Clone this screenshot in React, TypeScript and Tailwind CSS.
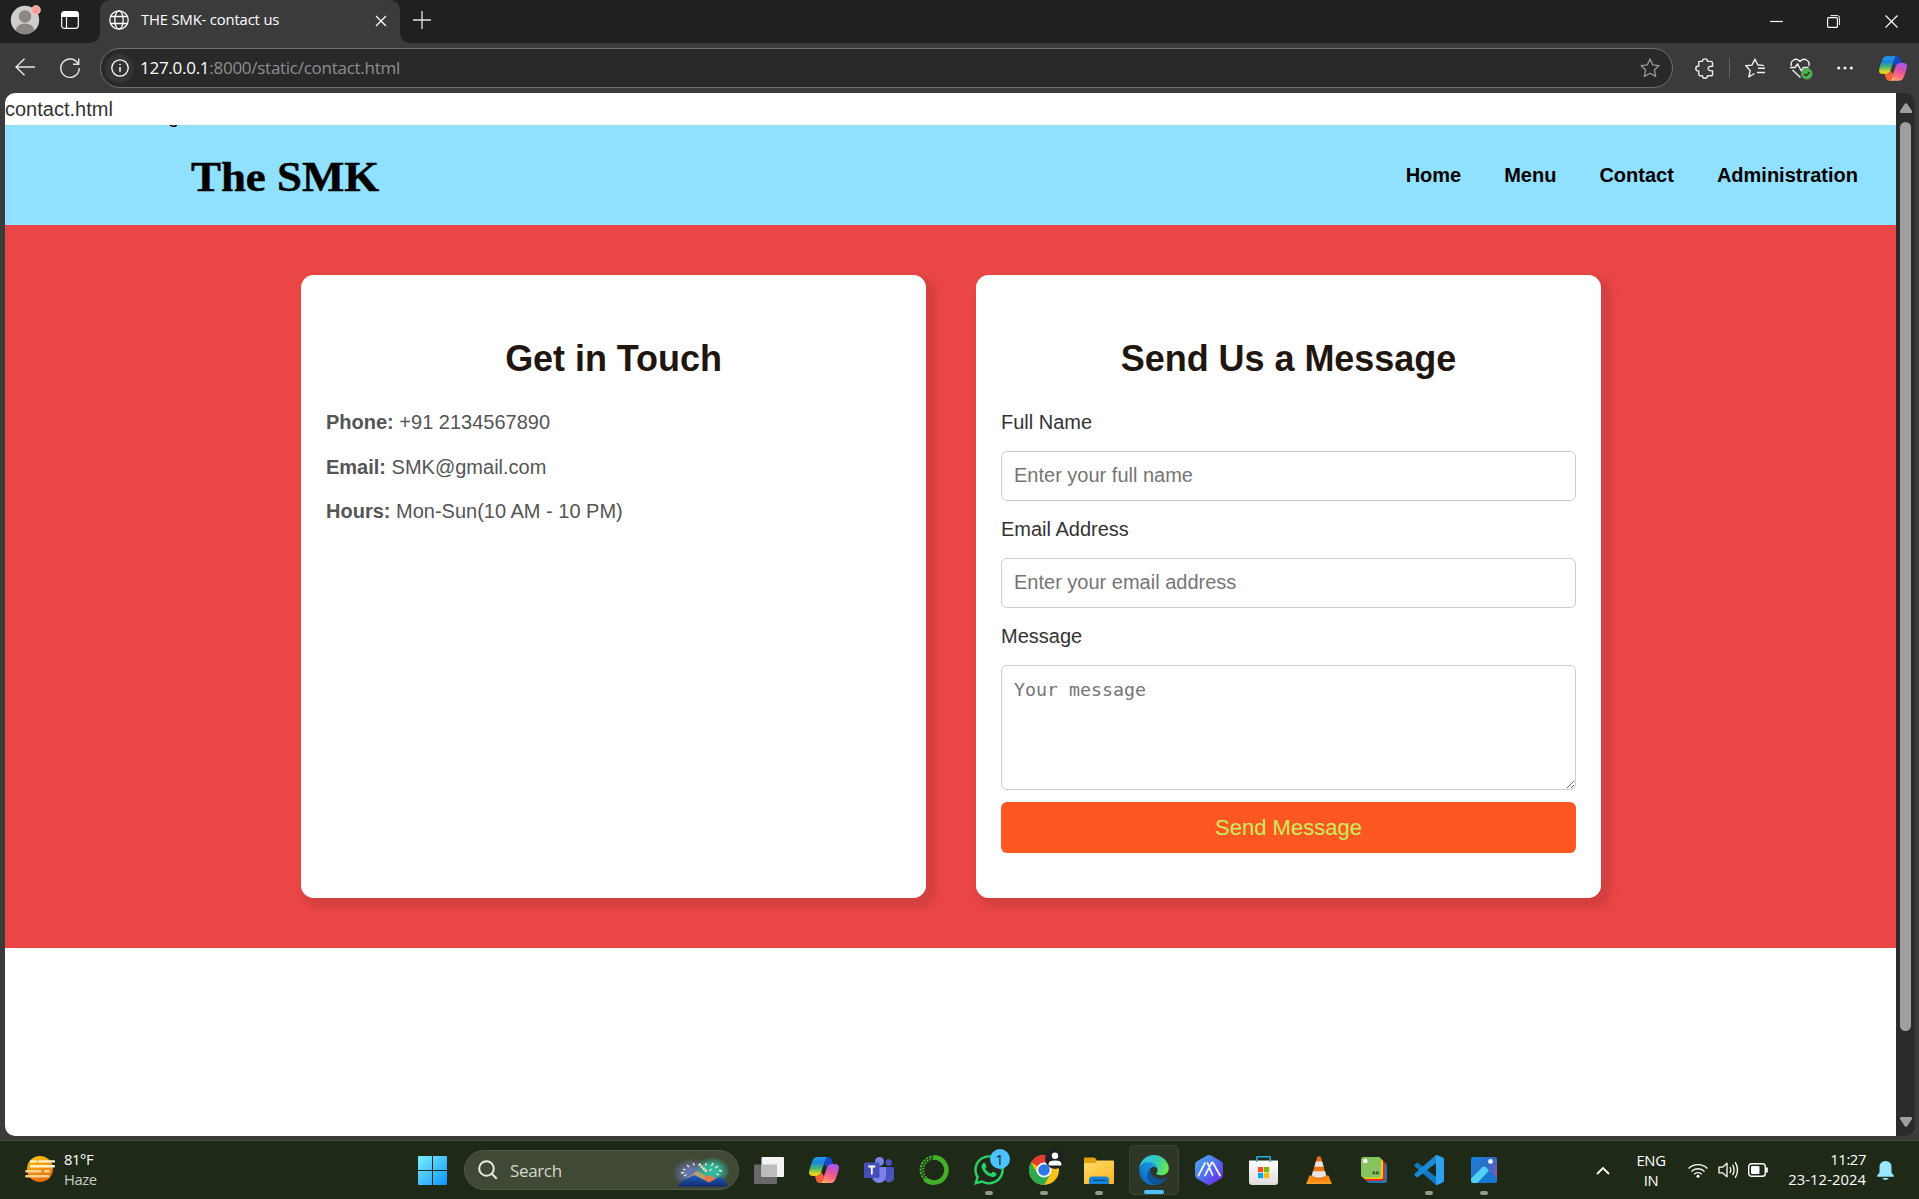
import React from "react";
import { FaWhatsapp } from "react-icons/fa";

const ui = "font-['Open_Sans',sans-serif]";

function CopilotIcon({ id, className }: { id: string; className: string }) {
  return (
    <svg viewBox="0 0 30 27" className={className}>
      <defs>
        <linearGradient id={id + "a"} x1="0" y1="0" x2="0" y2="1">
          <stop offset="0" stopColor="#1f9cf0" />
          <stop offset="0.3" stopColor="#1b84dd" />
          <stop offset="0.6" stopColor="#4bb573" />
          <stop offset="0.85" stopColor="#d3d62b" />
          <stop offset="1" stopColor="#f5c518" />
        </linearGradient>
        <linearGradient id={id + "b"} x1="0.6" y1="0" x2="0.3" y2="1">
          <stop offset="0" stopColor="#a855f0" />
          <stop offset="0.4" stopColor="#e0539c" />
          <stop offset="0.75" stopColor="#ff6f7d" />
          <stop offset="1" stopColor="#ffb168" />
        </linearGradient>
      </defs>
      <path d="M8.500.5h11.500c-2 0-3 1.200-3.800 3.500l-4.200 12c-.9 2.500-2 3.500-4.500 3.500h-3.500c-3 0-4.500-1.700-3.800-5 .8-3.800 2-7.500 3.600-11 .9-2 2.200-3 4.700-3z" fill={`url(#${id}a)`} />
      <path d="M21.500 26.500h-11.500c2 0 3-1.200 3.800-3.500l4.200-12c.9-2.500 2-3.500 4.500-3.500h3.500c3 0 4.500 1.700 3.800 5-.8 3.800-2 7.500-3.600 11-.9 2-2.200 3-4.700 3z" fill={`url(#${id}b)`} />
      <path d="M19 .5c2.400 0 3.200 1 3.800 3l1.200 4h-2c-2 0-3.200.8-4 3l-.4 1-2.600-4.500L16.200 4c.7-2.300 1.500-3.500 2.800-3.500z" fill="#1547c8" />
      <path d="M11 26.500c-2.400 0-3.200-1-3.800-3l-1.200-4h2c2 0 3.200-.8 4-3l.4-1 2.600 4.500-1.200 3c-.7 2.300-1.500 3.500-2.800 3.500z" fill="#f8603a" />
    </svg>
  );
}

function TitleBar() {
  return (
    <div className={`flex h-[43px] shrink-0 bg-[#3b3b3b] text-white ${ui}`}>
      <div className="flex w-[100px] shrink-0 items-start rounded-br-[10px] bg-[#202020] pt-[5px] pl-[10px]">
        <svg viewBox="0 0 32 30" className="h-[30px] w-8">
          <circle cx="15" cy="15" r="14.200" fill="#d0cecb" />
          <circle cx="15" cy="11.500" r="6.200" fill="#8b8784" />
          <path d="M5.500 25.500c1-4 4-7 9.500-7s8.500 3 9.500 7q-4 3.700-9.500 3.700t-9.500-3.700z" fill="#8b8784" />
          <circle cx="26" cy="5" r="4.400" fill="#ff9d96" stroke="#e6d3d0" strokeWidth="0.800" />
        </svg>
        <svg viewBox="0 0 18 18" className="mt-[6px] ml-[19px] h-[18px] w-[18px]" fill="none" stroke="#fff" strokeWidth="1.200">
          <rect x="0.700" y="0.700" width="16.600" height="16.600" rx="2.500" />
          <path d="M1 2.500q.5-1.500 2-1.500h12q1.500 0 2 1.500v3h-16z" fill="#fff" />
          <path d="M5.500 5v12" />
        </svg>
      </div>
      <div className="bg-[#202020]">
        <div className="flex h-[43px] w-[300px] items-start rounded-t-[10px] bg-[#3b3b3b] pt-[10px] pl-[9px]">
          <svg viewBox="0 0 20 20" className="h-5 w-5" fill="none" stroke="#fff" strokeWidth="1.300">
            <circle cx="10" cy="10" r="9.200" />
            <ellipse cx="10" cy="10" rx="4.200" ry="9.200" />
            <path d="M1.800 6.500h16.400M1.800 13.500h16.400" />
          </svg>
          <span className="-mt-px ml-[12px] w-[140px] text-[14.800px] leading-5 tracking-[-0.150px] whitespace-nowrap">THE SMK- contact us</span>
          <svg viewBox="0 0 12 12" className="mt-[5px] ml-[94px] h-3 w-3" stroke="#fff" strokeWidth="1.300">
            <path d="M1 1l10 10M11 1L1 11" />
          </svg>
        </div>
      </div>
      <div className="flex flex-1 items-start rounded-bl-[10px] bg-[#202020]">
        <svg viewBox="0 0 18 18" className="mt-[11px] ml-[13px] h-[18px] w-[18px]" stroke="#e4e4e4" strokeWidth="1.300">
          <path d="M9 0v18M0 9h18" />
        </svg>
        <div className="flex-1" />
        <svg viewBox="0 0 13 13" className="mt-[15px] h-[13px] w-[13px]" stroke="#fff" strokeWidth="1.200">
          <path d="M0 6.500h13" />
        </svg>
        <svg viewBox="0 0 13 13" className="mt-[15px] ml-[44px] h-[13px] w-[13px]" stroke="#fff" fill="none">
          <rect x="0.600" y="2.600" width="9.800" height="9.800" rx="1" strokeWidth="1.200" />
          <path d="M3.500.6h7q1.900 0 1.900 1.900v7.500" />
        </svg>
        <svg viewBox="0 0 13 13" className="mt-[15px] mr-[21px] ml-[45px] h-[13px] w-[13px]" stroke="#fff" strokeWidth="1.200">
          <path d="M.5.5l12 12M12.500.5l-12 12" />
        </svg>
      </div>
    </div>
  );
}

function Toolbar() {
  return (
    <div className={`flex h-[50px] shrink-0 items-center bg-[#3b3b3b] ${ui}`}>
      <svg viewBox="0 0 20 18" className="-mt-[2px] ml-[15px] h-[18px] w-5" fill="none" stroke="#e6e6e6" strokeWidth="1.500">
        <path d="M9.500.8L1 9l8.500 8.200M1 9h19" />
      </svg>
      <svg viewBox="0 0 20 20" className="ml-[25px] h-5 w-5" fill="none" stroke="#e6e6e6" strokeWidth="1.400">
        <path d="M18.200 6A9.200 9.200 0 1 0 19.200 10" />
        <path d="M18.700.5v5.700h-5.700" />
      </svg>
      <div className="ml-5 flex h-10 w-[1573px] items-center rounded-full border border-[#707070] bg-[#292929] pl-[4px]">
        <div className="flex h-[29px] w-[29px] items-center justify-center rounded-full bg-[#343434]">
          <svg viewBox="0 0 18 18" className="h-[18px] w-[18px]" fill="none" stroke="#fff" strokeWidth="1.300">
            <circle cx="9" cy="9" r="8.200" />
            <path d="M9 8v4.800" strokeWidth="1.500" />
            <circle cx="9" cy="5.600" r="0.500" fill="#fff" strokeWidth="0.800" />
          </svg>
        </div>
        <span className="ml-[6px] text-[17px] tracking-[-0.270px] whitespace-nowrap text-[#8f8f8f]">
          <span className="text-white">127.0.0.1</span>:8000/static/contact.html
        </span>
        <svg viewBox="0 0 20 20" className="mr-[12px] ml-auto h-5 w-5" fill="none" stroke="#9a9a9a" strokeWidth="1.300" strokeLinejoin="round">
          <path d="M10 1l2.700 5.900 6.300.7-4.700 4.300 1.400 6.500L10 15.200l-5.700 3.200 1.400-6.500L1 7.600l6.300-.7z" />
        </svg>
      </div>
      <svg viewBox="0 0 20 22" className="ml-[22px] h-[21px] w-[19px]" fill="none" stroke="#e8e8e8" strokeWidth="1.500" strokeLinejoin="round">
        <path d="M4 3.500h3.800c0-3.500 5.400-3.500 5.400 0h3.300q2 0 2 2v3.300c-3.600-.5-4.700 1.200-4.700 2.300s1.100 2.800 4.700 2.300v3.300q0 2-2 2h-3.300c0 3.500-5.400 3.500-5.400 0H5.500q-1.500 0-1.500-1.500v-3.500c-4.200 0-4.200-5.400 0-5.400z" />
      </svg>
      <div className="ml-[15px] h-5 w-px bg-[#636363]" />
      <svg viewBox="0 0 20 20" className="ml-[15px] h-5 w-5" fill="none" stroke="#f0f0f0" strokeWidth="1.400" strokeLinejoin="round">
        <path d="M9.500 15.500L3.800 18.800l1.400-6.400L.8 7.800l6.100-.7L10 1.200l2.700 5.500 6.300.9" />
        <path d="M13 10.300h7M12 14.500h8" />
      </svg>
      <svg viewBox="0 0 23 22" className="mt-[2px] ml-[25px] h-[22px] w-[23px]" fill="none" stroke="#f0f0f0" strokeWidth="1.400" strokeLinejoin="round">
        <path d="M1.500 8C-.5 3 6-1.500 10 3.500 14-1.500 20.500 3 18.800 8" />
        <path d="M0 9.500h5l2.500-3.700 3.800 7.200 2.300-3.500h5" />
        <path d="M2.500 12l8 7.500" />
        <circle cx="16.800" cy="15.800" r="5.700" fill="#4fae4f" stroke="none" />
        <path d="M14.200 16l1.900 1.800 3.500-3.600" stroke="#1e3a1e" strokeWidth="1.500" />
      </svg>
      <svg viewBox="0 0 16 4" className="-mt-[1px] ml-[24px] h-1 w-4" fill="#f0f0f0">
        <circle cx="1.700" cy="2" r="1.600" />
        <circle cx="8" cy="2" r="1.600" />
        <circle cx="14.300" cy="2" r="1.600" />
      </svg>
      <CopilotIcon id="tb" className="ml-[26px] h-[27px] w-7" />
    </div>
  );
}

function Field({ label, placeholder }: { label: string; placeholder: string }) {
  return (
    <>
      <label className="text-[#333]">{label}</label>
      <input
        placeholder={placeholder}
        className="h-[50px] rounded-[6px] border border-[#ccc] px-[12px] pb-[1px] text-[20px] placeholder:text-[#757575]"
      />
    </>
  );
}

const cardClass =
  "w-[625px] rounded-[12.500px] bg-white px-[25px] pt-[54.900px] text-[20px] leading-8 shadow-[6px_6px_8px_4px_rgba(0,0,0,0.1)]";
const headingClass = "mb-[18.750px] text-center text-[36px] leading-[57.600px] font-bold tracking-[-0.050px] text-[#1f1610]";

function WebPage() {
  return (
    <div className="flex-1 overflow-hidden rounded-l-[10px] bg-white font-['Liberation_Sans',Arial,sans-serif] text-[20px] leading-8 text-[#333]">
      <div className="h-8">contact.html</div>
      <header className="relative flex h-[100px] items-center justify-between overflow-hidden bg-[#90e0ff] pr-[38px] pl-[186px] text-black">
        <span className="absolute -top-[25px] left-[163px]" aria-hidden="true">g</span>
        <div className="mt-[4px] origin-left scale-x-[1.055] font-['Liberation_Serif',serif] text-[42.500px] leading-[50px] font-bold whitespace-nowrap [-webkit-text-stroke:0.500px_black]">The SMK</div>
        <nav className="flex gap-[43px] font-bold">
          <a>Home</a>
          <a>Menu</a>
          <a>Contact</a>
          <a>Administration</a>
        </nav>
      </header>
      <main className="flex h-[723px] justify-center gap-[50px] bg-[#eb4646] py-[50px] pl-px">
        <section className={cardClass}>
          <h2 className={headingClass}>Get in Touch</h2>
          <div className="flex flex-col gap-[12.500px] text-[#555]">
            <p><strong>Phone:</strong> +91 2134567890</p>
            <p><strong>Email:</strong> SMK@gmail.com</p>
            <p><strong>Hours:</strong> Mon-Sun(10 AM - 10 PM)</p>
          </div>
        </section>
        <section className={cardClass}>
          <h2 className={headingClass}>Send Us a Message</h2>
          <form className="flex flex-col gap-[12.500px]">
            <Field label="Full Name" placeholder="Enter your full name" />
            <Field label="Email Address" placeholder="Enter your email address" />
            <label className="text-[#333]">Message</label>
            <textarea
              placeholder="Your message"
              className="h-[125px] resize rounded-[6px] border border-[#ccc] px-[12px] pt-[12px] font-['DejaVu_Sans_Mono',monospace] text-[18.270px] leading-[24px] placeholder:text-[#757575]"
            />
            <button type="button" className="h-[51px] rounded-[6px] bg-[#ff5722] text-[22px] text-[#c6ee5e]">Send Message</button>
          </form>
        </section>
      </main>
    </div>
  );
}

function Scrollbar() {
  return (
    <div className="flex w-[19px] shrink-0 flex-col items-center rounded-r-[10px] bg-[#2b2b2b] pt-[10px] pb-[9px]">
      <svg viewBox="0 0 12 10" className="h-[10px] w-3" fill="#9f9f9f">
        <path d="M4.800.8q1.200-1.200 2.400 0L12 8q.3 2-1 2H1Q-.3 10 0 8z" />
      </svg>
      <div className="mt-[9px] h-[909px] w-[11px] rounded-full bg-[#9f9f9f]" />
      <svg viewBox="0 0 12 10" className="mt-auto h-[10px] w-3" fill="#9f9f9f">
        <path d="M4.800 9.200q1.200 1.200 2.400 0L12 2q.3-2-1-2H1Q-.3 0 0 2z" />
      </svg>
    </div>
  );
}

function AppCell({ children, running, active }: { children: React.ReactNode; running?: boolean; active?: boolean }) {
  return (
    <div className="flex w-[55px] justify-center">
      <div
        className={
          active
            ? "relative flex h-[50px] w-[50px] items-center justify-center rounded-[5px] border border-[#3a4433] bg-[#2d3627]"
            : "relative flex h-[50px] w-[50px] items-center justify-center"
        }
      >
        {children}
        {running && <div className="absolute bottom-0 left-[21px] h-1 w-2 rounded-full bg-[#929b8c]" />}
        {active && <div className="absolute bottom-0 left-[14px] h-1 w-5 rounded-full bg-[#4cc2ff]" />}
      </div>
    </div>
  );
}

function TeamsIcon() {
  return (
    <svg viewBox="0 0 30 26" className="h-[26px] w-[30px]">
      <circle cx="24.700" cy="5.500" r="3.200" fill="#4b53bc" />
      <path d="M20 10h8.500q1.500 0 1.500 1.500v6.500a5 5 0 0 1-10 4z" fill="#4b53bc" />
      <circle cx="15.500" cy="4.500" r="4.500" fill="#7b83eb" />
      <path d="M9 10h12q1 0 1 1v8a7 7 0 0 1-14 0z" fill="#7b83eb" />
      <rect x="0" y="5.500" width="15.500" height="15.500" rx="1.500" fill="#464eb8" />
      <path d="M4.300 9.500h7M7.800 9.500v8" stroke="#fff" strokeWidth="1.800" />
    </svg>
  );
}

function RingIcon() {
  return (
    <svg viewBox="0 0 30 30" className="h-[30px] w-[30px]" fill="none" stroke="#43b02a">
      <path d="M15 2.400A12.600 12.600 0 1 1 6 24" strokeWidth="4.600" />
      <path d="M6 25A13.600 13.600 0 0 1 15 1.400" strokeWidth="2" strokeDasharray="2.400 1" />
      <path d="M7 22.500A11.200 11.200 0 0 1 15 3.900" strokeWidth="2" strokeDasharray="1.600 1.300" />
    </svg>
  );
}

function ChromeIcon() {
  return (
    <div className="relative">
      <svg viewBox="0 0 30 30" className="h-[30px] w-[30px]">
        <circle cx="15" cy="15" r="15" fill="#fbc116" />
        <path d="M15 15L2 7.500A15 15 0 0 1 28 7.500H15z" fill="#e33b2e" />
        <path d="M2 7.500A15 15 0 0 0 15 30l6.500-11.200L15 15 8.500 18.700z" fill="#2da94f" />
        <circle cx="15" cy="15" r="7.500" fill="#fff" />
        <circle cx="15" cy="15" r="5.800" fill="#2e76ea" />
      </svg>
      <svg viewBox="0 0 20 20" className="absolute -top-[6px] left-4 h-5 w-5">
        <circle cx="10" cy="10" r="10" fill="#202124" />
        <circle cx="10" cy="6.800" r="3.200" fill="#fff" />
        <path d="M3.700 16.500v-2q0-3 6.300-3t6.300 3v2z" fill="#fff" />
      </svg>
    </div>
  );
}

function FolderIcon() {
  return (
    <svg viewBox="0 0 30 27" className="h-[27px] w-[30px]">
      <defs>
        <linearGradient id="fold" x1="0" y1="0" x2="0.600" y2="1">
          <stop offset="0" stopColor="#ffdc6b" />
          <stop offset="1" stopColor="#fdb92a" />
        </linearGradient>
      </defs>
      <path d="M0 1.500Q0 .5 1.200.5h8.300q1 0 1.700.7L13.500 4v5H0z" fill="#e0a10d" />
      <path d="M0 6h11l2.500-2.500H29q1 0 1 1V26q0 1-1 1H1q-1 0-1-1z" fill="url(#fold)" />
      <path d="M5 27v-4q0-3.500 3.500-3.500h13q3.500 0 3.500 3.500v4z" fill="#1683d8" />
      <path d="M9 23.300h12.500" stroke="#0a4a86" strokeWidth="1.300" />
    </svg>
  );
}

function EdgeIcon() {
  return (
    <svg viewBox="4 0 258 259" className="h-[30px] w-[30px]">
      <defs>
        <linearGradient id="e1" x1="0" y1="0" x2="1" y2="0">
          <stop offset="0" stopColor="#0c59a4" />
          <stop offset="1" stopColor="#114a8b" />
        </linearGradient>
        <linearGradient id="e2" x1="0.900" y1="0.200" x2="0.200" y2="0.900">
          <stop offset="0" stopColor="#1b9de2" />
          <stop offset="0.600" stopColor="#1480d2" />
          <stop offset="1" stopColor="#0d65b8" />
        </linearGradient>
        <linearGradient id="e3" x1="0" y1="0.300" x2="1" y2="0.600">
          <stop offset="0" stopColor="#35c1f1" />
          <stop offset="0.500" stopColor="#2fc8ba" />
          <stop offset="1" stopColor="#66eb4e" />
        </linearGradient>
      </defs>
      <path d="M235.680 195.460a93.730 93.730 0 0 1-10.540 4.710 101.870 101.870 0 0 1-35.900 6.460c-47.320 0-88.540-32.550-88.540-74.320A31.480 31.480 0 0 1 117.130 105c-42.800 1.800-53.800 46.400-53.800 72.530 0 73.880 68.090 81.370 82.760 81.370 7.910 0 19.840-2.300 27-4.560l1.310-.44A128.340 128.340 0 0 0 241 201.100a4 4 0 0 0-5.320-5.640z" fill="url(#e1)" />
      <path d="M110.340 246.340A79.200 79.200 0 0 1 87.600 225a80.720 80.720 0 0 1 29.530-120c3.120-1.470 8.450-4.130 15.540-4a32.350 32.350 0 0 1 25.690 13 31.880 31.880 0 0 1 6.360 18.660c0-.21 24.460-79.600-80-79.600-43.900 0-80 41.660-80 78.210a130.150 130.150 0 0 0 12.110 56 128 128 0 0 0 156.380 67.110 75.550 75.550 0 0 1-62.780-8z" fill="url(#e2)" />
      <path d="M156.940 153.780c-.81 1.050-3.300 2.500-3.300 5.660 0 2.610 1.700 5.120 4.720 7.230 14.380 10 41.490 8.680 41.560 8.680a59.560 59.560 0 0 0 30.270-8.350 61.380 61.380 0 0 0 30.430-52.880c.26-22.410-8-37.310-11.340-43.910C228.090 28.760 182.350 0 132.610 0a128 128 0 0 0-128 126.200c.48-36.540 36.800-66.050 80-66.050 3.500 0 23.460.34 42 10.070 16.340 8.580 24.900 18.940 30.850 29.210 6.180 10.670 7.280 24.150 7.280 29.520s-2.740 13.330-7.800 19.830z" fill="url(#e3)" />
    </svg>
  );
}

function HexIcon() {
  return (
    <svg viewBox="0 0 28 30" className="h-[30px] w-7">
      <defs>
        <linearGradient id="hex" x1="0.100" y1="0.100" x2="0.900" y2="0.900">
          <stop offset="0" stopColor="#4fa0f0" />
          <stop offset="0.500" stopColor="#4f70ec" />
          <stop offset="1" stopColor="#6a2be0" />
        </linearGradient>
      </defs>
      <path d="M12 .6q2-1 4 0l10 5.600q2 1.200 2 3.300v11q0 2.200-2 3.300l-10 5.600q-2 1.100-4 0L2 23.800Q0 22.700 0 20.500v-11Q0 7.400 2 6.200z" fill="url(#hex)" />
      <path d="M3.500 20.500L10 8M10 20.500L16.500 8q.8-1.300 1.600 0L25 20.500M12.500 8l5 12" fill="none" stroke="#f1f2ff" strokeWidth="1.800" strokeLinecap="round" />
    </svg>
  );
}

function StoreIcon() {
  return (
    <svg viewBox="0 0 29 29" className="h-[29px] w-[29px]">
      <defs>
        <linearGradient id="bag" x1="0" y1="0" x2="0" y2="1">
          <stop offset="0" stopColor="#ffffff" />
          <stop offset="1" stopColor="#dcdcdc" />
        </linearGradient>
      </defs>
      <path d="M0 4.500h29V26q0 3-3 3H3q-3 0-3-3z" fill="url(#bag)" />
      <path d="M7.800 6V1.600q0-.9.900-.9h11.600q.9 0 .9.900V6" fill="none" stroke="#27b3ea" strokeWidth="1.500" />
      <rect x="9" y="11" width="5.200" height="5.200" fill="#f25022" />
      <rect x="15" y="11" width="5.200" height="5.200" fill="#7fba00" />
      <rect x="9" y="17" width="5.200" height="5.200" fill="#00a4ef" />
      <rect x="15" y="17" width="5.200" height="5.200" fill="#ffb900" />
    </svg>
  );
}

function ConeIcon() {
  return (
    <svg viewBox="0 0 26 28" className="h-7 w-[26px]">
      <path d="M3.500 19.500h19l3 7.500q.2.800-.7.800H1.200q-.9 0-.7-.8z" fill="#fb8c0b" />
      <path d="M.6 26.500h24.800v1.300H.6z" fill="#ffab3d" />
      <path d="M11.300.8q1.700-1.300 3.400 0L20.300 20q-1 3.500-7.300 3.500T5.700 20z" fill="#ee7411" />
      <path d="M9.900 5.500h6.200l1.600 5.200H8.300zM6.900 15.300h12.200l1 3.700q-1.500 2.800-7.100 2.800T5.900 19z" fill="#e6e4e2" />
    </svg>
  );
}

function StackIcon() {
  return (
    <svg viewBox="0 0 26 26" className="h-[26px] w-[26px]">
      <rect x="6" y="6" width="20" height="20" rx="2.500" fill="#1b78b8" />
      <rect x="4" y="4" width="20" height="20" rx="2.500" fill="#e02b2b" />
      <rect x="2" y="2" width="20" height="20" rx="2.500" fill="#f6c915" />
      <rect x="0" y="0" width="20" height="20.500" rx="2.500" fill="#86c45f" />
      <circle cx="4.200" cy="4" r="2.300" fill="#fff" />
      <rect x="11.500" y="14.500" width="2.700" height="2.700" fill="#42553a" />
      <rect x="15" y="14.500" width="2.700" height="2.700" fill="#42553a" />
    </svg>
  );
}

function CodeIcon() {
  return (
    <svg viewBox="0 0 30 30" className="h-[30px] w-[30px]">
      <path d="M.8 9.500L2.500 8q.8-.6 1.600 0L22 22v8L.8 11.400q-.9-1 0-1.900z" fill="#0f78c0" />
      <path d="M.8 20.500L2.500 22q.8.600 1.600 0L22 8V0L.8 18.600q-.9 1 0 1.900z" fill="#1b8ad6" />
      <path d="M22 .2q.9-.4 1.800 0l5 2.400Q30 3.200 30 4.500v21q0 1.300-1.200 1.900l-5 2.400q-.9.400-1.800 0z" fill="#2ba2f0" />
    </svg>
  );
}

function PhotosIcon() {
  return (
    <svg viewBox="0 0 26 26" className="h-[26px] w-[26px]">
      <defs>
        <linearGradient id="ph" x1="0" y1="0" x2="1" y2="0.700">
          <stop offset="0" stopColor="#1683dc" />
          <stop offset="0.600" stopColor="#2f6bc4" />
          <stop offset="1" stopColor="#8a58ae" />
        </linearGradient>
        <clipPath id="phc"><rect width="26" height="26" rx="2.500" /></clipPath>
      </defs>
      <g clipPath="url(#phc)">
        <rect width="26" height="26" fill="url(#ph)" />
        <path d="M11 10.500q2-1.800 4 0L29 24v4H6z" fill="#1577cf" />
        <path d="M-1 22.500L11 10.500q2-1.800 4 0l3 3L5 27.500H-1z" fill="#4ed0f7" />
        <circle cx="19.500" cy="4.500" r="2.400" fill="#f0f3fa" />
      </g>
    </svg>
  );
}

function SearchArt() {
  return (
    <svg viewBox="0 0 56 30" className="h-[30px] w-14">
      <defs>
        <radialGradient id="s1"><stop offset="0.300" stopColor="#6672a8" /><stop offset="1" stopColor="#6672a8" stopOpacity="0" /></radialGradient>
        <radialGradient id="s2"><stop offset="0.400" stopColor="#2fb89a" /><stop offset="1" stopColor="#2fb89a" stopOpacity="0" /></radialGradient>
        <linearGradient id="s3" x1="0" y1="0" x2="0" y2="1"><stop offset="0" stopColor="#1f62c0" /><stop offset="1" stopColor="#122a6e" /></linearGradient>
      </defs>
      <ellipse cx="18" cy="16" rx="19" ry="15" fill="url(#s1)" />
      <ellipse cx="39" cy="14" rx="18" ry="14" fill="url(#s2)" />
      <path d="M14 21L24 14l8 4 2 6z" fill="#e0ad58" opacity="0.700" />
      <path d="M29 21l7-3 7 3-7 6z" fill="#f2784c" opacity="0.900" />
      <path d="M4.500 28.500L9 24l11-5.600q1.200-.6 2.400 0L36 25.500l9.800-5.200q1.200-.6 2.400 0L53 25l2 3.500q-2 1.300-5 1.300H9q-3 0-4.500-1.300z" fill="url(#s3)" />
      <path d="M26 7l8 8" stroke="#f6e8c4" strokeWidth="2.600" strokeDasharray="2 0.800" />
      <path d="M20 6l1.500 2.500M14 8l2 2M10 12l2.500 1M8 16l3-.5M11 19l2.500-1.500M33 6l-.5 3M40 6l-1.500 3M45 9l-2.500 2M49 14l-3-.5M46 18l-2.500-1.200M39 12l-3 2" stroke="#f4efe0" strokeWidth="1.300" />
    </svg>
  );
}

function Taskbar() {
  return (
    <div className={`flex h-[58px] shrink-0 items-center bg-[#1f2917] text-white ${ui}`}>
      <div className="flex w-[418px] items-center pl-[25px]">
        <svg viewBox="0 0 30 26" className="-mt-[2px] h-[26px] w-[30px]">
          <defs>
            <linearGradient id="sun" x1="0.200" y1="0" x2="0.600" y2="1">
              <stop offset="0" stopColor="#fcc410" />
              <stop offset="1" stopColor="#e96608" />
            </linearGradient>
          </defs>
          <circle cx="15" cy="13" r="13" fill="url(#sun)" />
          <path d="M6 5.400h5M14 5.400h15M6 10.200h23" stroke="#fff0cf" strokeWidth="2.400" strokeLinecap="round" />
          <path d="M1.300 15.300h14M20 15.300h4M1.300 20.200h22" stroke="#f3d194" strokeWidth="2.400" strokeLinecap="round" />
        </svg>
        <div className="-mt-[2px] ml-[9px] text-[14.800px] leading-5 tracking-[-0.400px]">
          <div>81°F</div>
          <div className="text-[#c9cdc6]">Haze</div>
        </div>
      </div>
      <svg viewBox="0 0 29 29" className="h-[29px] w-[29px]">
        <defs>
          <linearGradient id="win" x1="0" y1="0" x2="1" y2="1" gradientUnits="objectBoundingBox">
            <stop offset="0" stopColor="#7cf0ff" />
            <stop offset="1" stopColor="#0c93fb" />
          </linearGradient>
        </defs>
        <path d="M1 0h13v14H0V1q0-1 1-1zM15 0h13q1 0 1 1v13H15zM0 15h14v14H1q-1 0-1-1zM15 15h14v13q0 1-1 1H15z" fill="url(#win)" />
      </svg>
      <div className="ml-[17px] flex h-10 w-[275px] items-center rounded-full border border-[#51594a] bg-[#404936] pl-[13px]">
        <svg viewBox="0 0 20 20" className="h-5 w-5" fill="none" stroke="#e9ebe7" strokeWidth="2">
          <circle cx="8.500" cy="8.500" r="7.300" />
          <path d="M13.800 13.800l5 5" />
        </svg>
        <span className="mt-px ml-[12px] text-[17px] tracking-[-0.350px] text-[#d3d6cf]">Search</span>
        <div className="mt-[4px] mr-[9px] ml-auto"><SearchArt /></div>
      </div>
      <div className="ml-[2px] flex">
        <AppCell>
          <svg viewBox="0 0 30 27" className="h-[27px] w-[30px]">
            <rect x="0" y="7.500" width="23" height="19.500" rx="1" fill="#686868" />
            <rect x="7.500" y="0" width="22.500" height="20" rx="1" fill="#f3f3f3" />
            <path d="M7.500 7.500H23V20H7.500z" fill="#bdbdbd" />
          </svg>
        </AppCell>
        <AppCell><CopilotIcon id="tk" className="h-7 w-[30px]" /></AppCell>
        <AppCell><TeamsIcon /></AppCell>
        <AppCell><RingIcon /></AppCell>
        <AppCell running>
          <FaWhatsapp className="h-[34px] w-[34px] text-[#25d366]" />
          <div className="absolute top-[4px] left-[26px] flex h-5 w-5 items-center justify-center rounded-full bg-[#4cc2ff] text-[15px] leading-none text-[#12222c]">1</div>
        </AppCell>
        <AppCell running><ChromeIcon /></AppCell>
        <AppCell running><FolderIcon /></AppCell>
        <AppCell active><EdgeIcon /></AppCell>
        <AppCell><HexIcon /></AppCell>
        <AppCell><StoreIcon /></AppCell>
        <AppCell><ConeIcon /></AppCell>
        <AppCell><StackIcon /></AppCell>
        <AppCell running><CodeIcon /></AppCell>
        <AppCell running><PhotosIcon /></AppCell>
      </div>
      <div className="flex-1" />
      <div className="flex items-center pr-[25px] text-[14.800px] leading-5">
        <svg viewBox="0 0 14 9" className="h-[9px] w-[14px]" fill="none" stroke="#fff" strokeWidth="1.800">
          <path d="M1 8l6-6 6 6" />
        </svg>
        <div className="ml-[26px] w-[30px] text-center tracking-[-0.300px]">
          <div>ENG</div>
          <div>IN</div>
        </div>
        <svg viewBox="0 0 20 15" className="ml-[22px] h-[15px] w-5" fill="none" stroke="#fff" strokeWidth="1.400">
          <path d="M.6 5.500a13.300 13.300 0 0 1 18.800 0M3.500 8.400a9.200 9.200 0 0 1 13 0M6.300 11.200a5.200 5.200 0 0 1 7.400 0" />
          <circle cx="10" cy="13.300" r="1.500" fill="#fff" stroke="none" />
        </svg>
        <svg viewBox="0 0 21 18" className="ml-[10px] h-[18px] w-[21px]" fill="none" stroke="#fff" strokeWidth="1.300" strokeLinejoin="round">
          <path d="M1 6.200h3.500l4.500-4v13.600l-4.500-4H1z" />
          <path d="M12 6q1.500 3 0 6M14.600 3.700q3 5.300 0 10.600M17.200 1.200q4.600 7.800 0 15.600" />
        </svg>
        <svg viewBox="0 0 20 14" className="ml-[9px] h-[14px] w-5" fill="none" stroke="#fff" strokeWidth="1.400">
          <rect x="0.700" y="0.700" width="16.600" height="12.600" rx="2.800" />
          <rect x="3" y="3" width="8.500" height="8" rx="1" fill="#fff" stroke="none" />
          <path d="M18.800 4.500v5" strokeWidth="2" />
        </svg>
        <div className="-mt-[2px] ml-[18px] w-[80px] text-right whitespace-nowrap">
          <div className="tracking-[-0.400px]">11:27</div>
          <div className="tracking-[0.050px]">23-12-2024</div>
        </div>
        <svg viewBox="0 0 17 19" className="ml-[11px] h-[19px] w-[17px]" fill="#98e6ff">
          <path d="M8.500 0q6 0 6 6.500v5l2.300 3q.3 1.300-1 1.300H1.200q-1.300 0-1-1.300l2.300-3v-5Q2.500 0 8.500 0zM5.500 17h6q-.8 2-3 2t-3-2z" />
        </svg>
      </div>
    </div>
  );
}

export default function App() {
  return (
    <div className="flex h-[1199px] w-[1919px] flex-col overflow-hidden bg-[#3b3b3b]">
      <TitleBar />
      <Toolbar />
      <div className="flex h-[1043px] shrink-0 pr-[4px] pl-[5px]">
        <WebPage />
        <Scrollbar />
      </div>
      <div className="h-[5px] shrink-0 border-b border-[#444c3e]" />
      <Taskbar />
    </div>
  );
}
